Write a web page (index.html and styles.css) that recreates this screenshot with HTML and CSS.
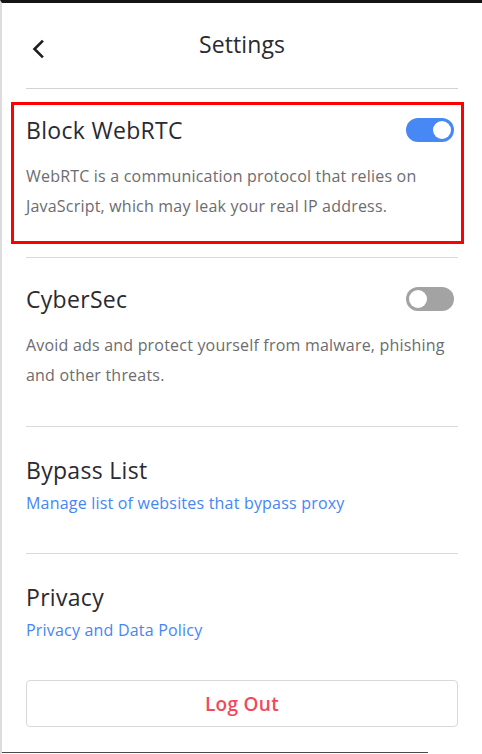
FILE: index.html
```html
<!DOCTYPE html>
<html lang="en">
<head>
<meta charset="utf-8">
<title>Settings</title>
<link rel="stylesheet" href="styles.css">
</head>
<body>
<div class="frame">
  <div class="edge-dark"></div>
  <div class="edge-blue"></div>
  <div class="panel">
    <header class="header">
      <button class="back" aria-label="Back">
        <svg width="14" height="20" viewBox="0 0 14 20"><polyline points="11,2.5 3.5,10 11,17.5" fill="none" stroke="#1d1d22" stroke-width="2.6" stroke-linecap="square"/></svg>
      </button>
      <h1 class="title">Settings</h1>
    </header>

    <section class="item item-desc highlighted">
      <div class="row">
        <h2 class="item-title">Block WebRTC</h2>
        <span class="toggle on"><span class="knob"></span></span>
      </div>
      <p class="desc">WebRTC is a communication protocol that relies on JavaScript, which may leak your real IP address.</p>
    </section>

    <section class="item item-desc">
      <div class="row">
        <h2 class="item-title">CyberSec</h2>
        <span class="toggle off"><span class="knob"></span></span>
      </div>
      <p class="desc">Avoid ads and protect yourself from malware, phishing and other threats.</p>
    </section>

    <section class="item item-link">
      <h2 class="item-title">Bypass List</h2>
      <a class="link" href="#">Manage list of websites that bypass proxy</a>
    </section>

    <section class="item item-link last">
      <h2 class="item-title">Privacy</h2>
      <a class="link" href="#">Privacy and Data Policy</a>
    </section>

    <button class="logout">Log Out</button>
  </div>
  <div class="edge-bottom"></div>
</div>
</body>
</html>
```

FILE: styles.css
```css
* { box-sizing: border-box; }

html, body {
  margin: 0;
  padding: 0;
  background: #ffffff;
}

body {
  font-family: "Open Sans", "Liberation Sans", sans-serif;
  color: #2a2a31;
}

.frame {
  position: relative;
  width: 482px;
  height: 754px;
  border-top: 3px solid #141414;
  border-left: 2px solid #dcdcdc;
  overflow: hidden;
}

.edge-dark {
  position: absolute;
  left: -2px;
  top: 0;
  width: 2px;
  height: 54px;
  background: #1a1a1a;
}

.edge-blue {
  position: absolute;
  left: -2px;
  top: 285px;
  width: 2px;
  height: 54px;
  background: #2f6fd1;
}

.edge-bottom {
  position: absolute;
  left: -2px;
  bottom: 1px;
  width: 428px;
  height: 1px;
  background: #4a4a4a;
}

.panel {
  display: flex;
  flex-direction: column;
  padding: 0 24px 0 24px;
}

.header {
  position: relative;
  height: 86px;
  display: flex;
  align-items: center;
  justify-content: center;
  border-bottom: 1px solid #d3d3d3;
  padding-bottom: 3px;
}

.back {
  position: absolute;
  left: 5px;
  top: 36px;
  border: 0;
  background: none;
  padding: 0;
  width: 14px;
  height: 20px;
  cursor: pointer;
}

.back svg { display: block; }

.title {
  margin: 0;
  font-size: 23px;
  font-weight: 400;
  letter-spacing: 0.1px;
  color: #2a2a31;
}

.item {
  position: relative;
  display: flex;
  flex-direction: column;
  border-bottom: 1px solid #dadada;
}

.item.last { border-bottom: 0; }

.item-desc { padding: 28px 0 36px; }
.item-link { padding: 30px 0 40px; }

.highlighted::after {
  content: "";
  position: absolute;
  left: -15px;
  right: -6px;
  top: 13px;
  bottom: 13px;
  border: 3px solid #ff0000;
  pointer-events: none;
}

.row {
  display: flex;
  align-items: center;
  justify-content: space-between;
}

.item-title {
  margin: 0;
  height: 26px;
  line-height: 26px;
  font-size: 23px;
  font-weight: 400;
  letter-spacing: 0.3px;
  color: #2a2a31;
}

.desc {
  margin: 18px 0 0;
  font-size: 16px;
  line-height: 30px;
  letter-spacing: 0.2px;
  color: #6c6c70;
}

.link {
  margin-top: 10px;
  font-size: 16px;
  line-height: 20px;
  letter-spacing: 0.2px;
  color: #4686f4;
  text-decoration: none;
}

.toggle {
  position: relative;
  display: flex;
  align-items: center;
  width: 48px;
  height: 24px;
  border-radius: 12px;
  margin-right: 4px;
  padding: 3px;
}

.toggle.on {
  background: #4788f5;
  justify-content: flex-end;
}

.toggle.off {
  background: #a3a3a3;
  justify-content: flex-start;
}

.knob {
  width: 18px;
  height: 18px;
  border-radius: 50%;
  background: #ffffff;
}

.logout {
  margin-top: 0;
  height: 47px;
  width: 100%;
  border: 1px solid #d8d8d8;
  border-radius: 4px;
  background: #ffffff;
  font-family: "Open Sans", "Liberation Sans", sans-serif;
  font-size: 19px;
  font-weight: 600;
  letter-spacing: 0.3px;
  color: #f1495b;
  cursor: pointer;
}
```
